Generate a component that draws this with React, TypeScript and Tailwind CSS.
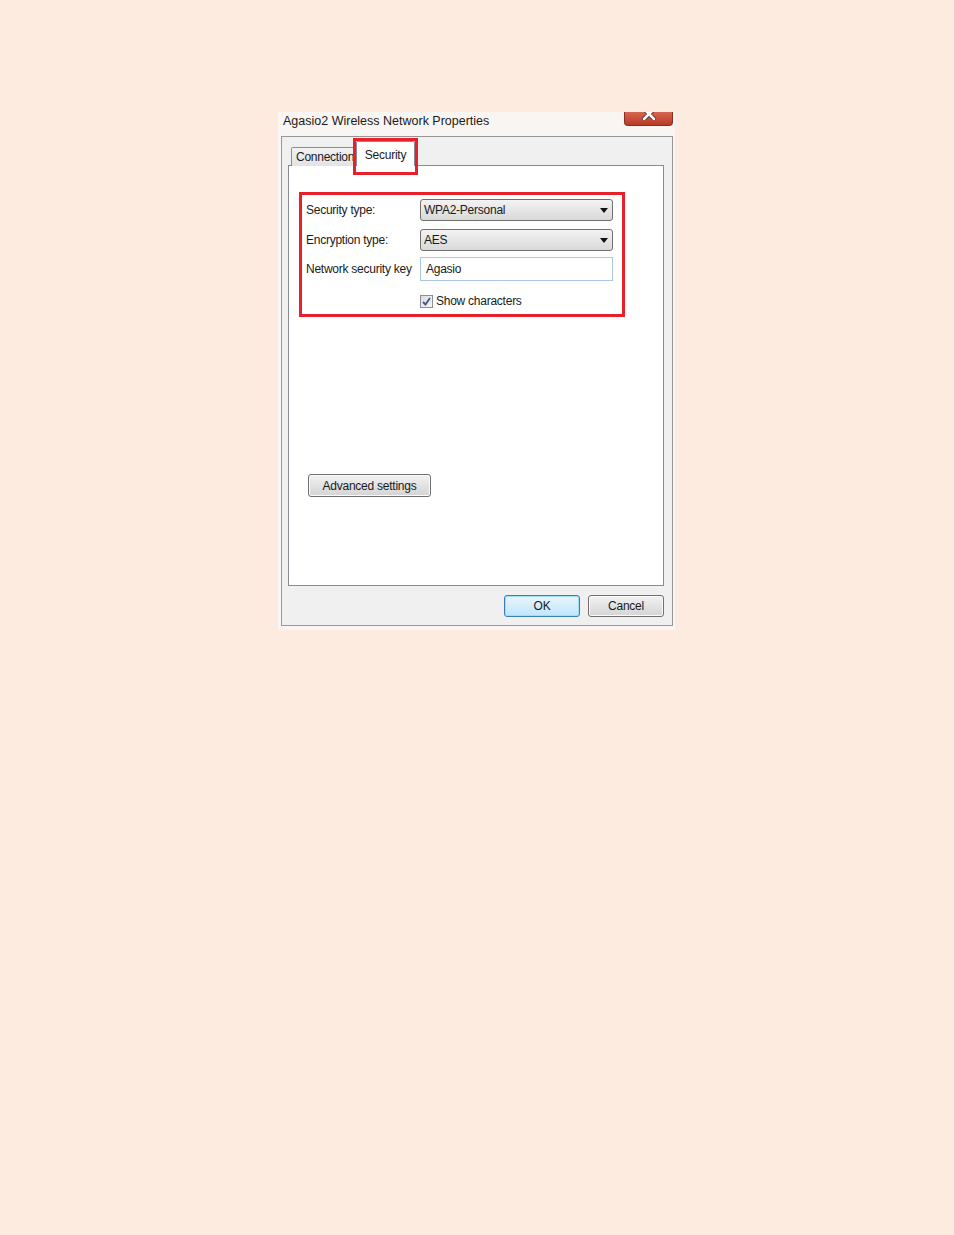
import { useState } from "react";

const font = { fontFamily: '"Liberation Sans", Arial, sans-serif' };

function Combo({ value }: { value: string }) {
  return (
    <div className="flex h-[22px] w-[193px] items-center justify-between rounded-[3px] border border-[#707070] bg-gradient-to-b from-[#f3f3f3] to-[#d9d9d9] pl-[3px] pr-[4px] text-[12px] tracking-[-0.25px] text-[#1a1a1a]">
      <span>{value}</span>
      <svg width="8" height="5" viewBox="0 0 8 5">
        <path d="M0 0 H8 L4 5 Z" fill="#111" />
      </svg>
    </div>
  );
}

function Row({ label, children }: { label: string; children: React.ReactNode }) {
  return (
    <div className="flex items-center">
      <span className="w-[114px] text-[12px] tracking-[-0.25px] text-[#1a1a1a]">{label}</span>
      {children}
    </div>
  );
}

function WinButton({ label, primary, className }: { label: string; primary?: boolean; className: string }) {
  return (
    <button
      className={`flex h-[22px] items-center justify-center rounded-[3px] border text-[12px] tracking-[-0.25px] text-[#1a1a1a] ${
        primary
          ? "border-[#3c7fb1] bg-gradient-to-b from-[#eaf6fd] to-[#bee6fd] shadow-[inset_0_0_0_1px_#9edcf9]"
          : "border-[#707070] bg-gradient-to-b from-[#f2f2f2] to-[#d4d4d4] shadow-[inset_0_0_0_1px_#fbfbfb]"
      } ${className}`}
    >
      {label}
    </button>
  );
}

export default function App() {
  const [show, setShow] = useState(true);

  return (
    <div className="min-h-[1235px] w-full bg-[#fdebe0] pt-[112px]" style={font}>
      {/* dialog glass frame */}
      <div className="ml-[278px] w-[397px] bg-[#f8f5f3] pb-[4px] pl-[3px] pr-[2px]">
        <div className="flex h-[24px] items-start justify-between">
          <span className="pl-[2px] pt-[1px] text-[12.5px] leading-[16px] text-[#1a1a1a]">
            Agasio2 Wireless Network Properties
          </span>
          <div className="relative h-[14px] w-[49px] overflow-hidden rounded-b-[4px] border border-t-0 border-[#8c2e22] bg-gradient-to-b from-[#d6664f] to-[#b93a26]">
            <svg className="absolute left-[17px] top-[-4px]" width="14" height="12" viewBox="0 0 14 12">
              <path d="M2 1 L12 11 M12 1 L2 11" stroke="#5a3a36" strokeWidth="4.5" strokeLinecap="round" />
              <path d="M2 1 L12 11 M12 1 L2 11" stroke="#ffffff" strokeWidth="2.5" strokeLinecap="round" />
            </svg>
          </div>
        </div>

        {/* dialog body */}
        <div className="flex h-[490px] flex-col border border-[#979797] bg-[#f0f0f0] pl-[6px] pr-[8px] pt-[4px]">
          {/* tabs */}
          <div className="relative z-10 flex h-[25px] items-end pl-[3px]">
            <div className="flex h-[19px] w-[64px] items-center rounded-t-[2px] border border-b-0 border-[#898c95] bg-gradient-to-b from-[#f2f2f2] to-[#e3e3e3] pl-[4px] text-[12px] tracking-[-0.25px] text-[#1a1a1a]">
              Connection
            </div>
            <div className="relative ml-[1px] flex h-[25px] w-[59px] items-start justify-center rounded-t-[2px] border border-b-0 border-[#898c95] bg-white pt-[4px] text-[12px] tracking-[-0.25px] text-[#1a1a1a]">
              Security
              <div className="absolute left-[-4px] top-[-4px] h-[37px] w-[65px] border-[3px] border-[#e8202a]" />
            </div>
          </div>

          {/* tab panel */}
          <div className="relative mt-[-1px] flex h-[421px] flex-col border border-[#898c95] bg-white pl-[17px] pt-[33px]">
            <div className="absolute left-[10px] top-[26px] h-[125px] w-[326px] border-[3px] border-[#e8202a]" />
            <div className="flex flex-col">
              <Row label="Security type:">
                <Combo value="WPA2-Personal" />
              </Row>
              <div className="mt-[8px]">
                <Row label="Encryption type:">
                  <Combo value="AES" />
                </Row>
              </div>
              <div className="mt-[6px]">
                <Row label="Network security key">
                  <div className="flex h-[24px] w-[193px] items-center border border-[#a9c7e0] bg-white pl-[5px] text-[12px] tracking-[-0.25px] text-[#1a1a1a]">
                    Agasio
                  </div>
                </Row>
              </div>
              <label className="ml-[114px] mt-[11px] flex cursor-pointer items-center gap-[3px] text-[12px] tracking-[-0.25px] text-[#1a1a1a]">
                <span
                  onClick={() => setShow(!show)}
                  className="flex h-[13px] w-[13px] items-center justify-center border border-[#8e8f8f] bg-gradient-to-br from-[#dcdcdc] to-[#f6f6f6]"
                >
                  {show && (
                    <svg width="9" height="9" viewBox="0 0 9 9">
                      <path d="M1 5 L3.5 7.5 L8 1" stroke="#3c5a9a" strokeWidth="1.8" fill="none" />
                    </svg>
                  )}
                </span>
                Show characters
              </label>
            </div>

            <WinButton label="Advanced settings" className="ml-[2px] mt-[164px] h-[23px] w-[123px]" />
          </div>

          {/* footer buttons */}
          <div className="mt-[9px] flex justify-end gap-[8px]">
            <WinButton label="OK" primary className="w-[76px]" />
            <WinButton label="Cancel" className="w-[76px]" />
          </div>
        </div>
      </div>
    </div>
  );
}
